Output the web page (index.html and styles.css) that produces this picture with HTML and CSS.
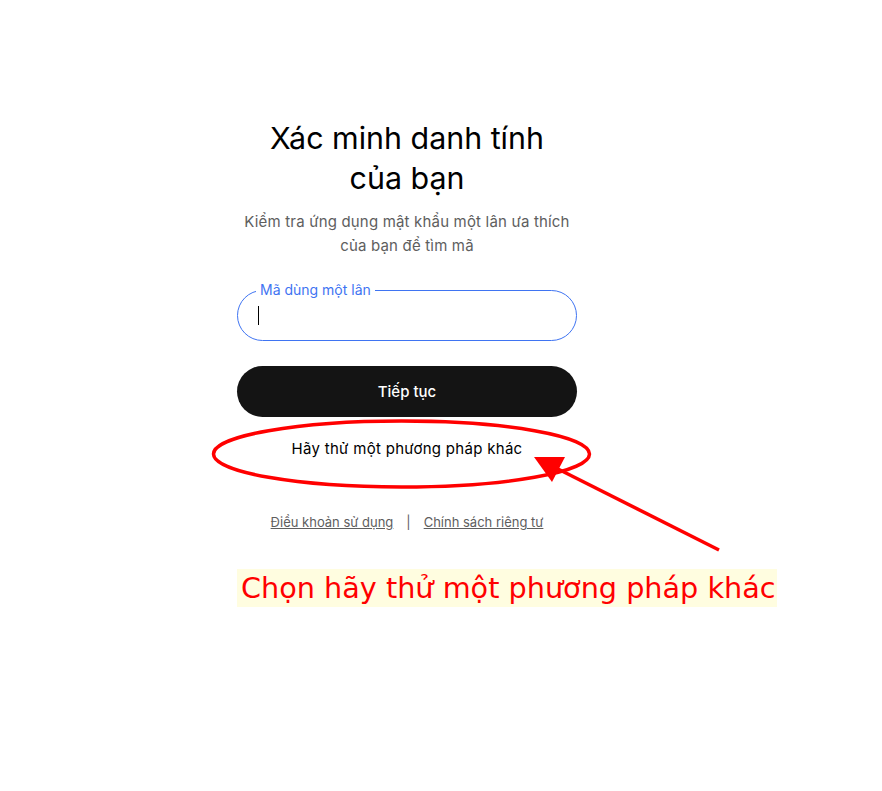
FILE: index.html
```html
<!DOCTYPE html>
<html lang="vi">
<head>
<meta charset="utf-8">
<link rel="stylesheet" href="styles.css">
</head>
<body>
<main class="page">
  <section class="col">
    <h1 class="title">Xác minh danh tính<br>của bạn</h1>
    <p class="sub">Kiểm tra ứng dụng mật khẩu một lân ưa thích<br>của bạn để tìm mã</p>
    <div class="field">
      <span class="label">Mã dùng một lân</span>
      <span class="caret"></span>
    </div>
    <button class="btn">Tiếp tục</button>
    <div class="alt">Hãy thử một phương pháp khác</div>
    <div class="links">
      <a class="lnk">Điều khoản sử dụng</a>
      <span class="sep">|</span>
      <a class="lnk">Chính sách riêng tư</a>
    </div>
  </section>
  <div class="caption">Chọn hãy thử một phương pháp khác</div>
</main>
<svg class="annot" width="882" height="791" viewBox="0 0 882 791">
  <ellipse cx="401.5" cy="454" rx="188" ry="33" fill="none" stroke="#ff0000" stroke-width="3.5"/>
  <line x1="719" y1="550" x2="556" y2="468" stroke="#ff0000" stroke-width="3.5"/>
  <polygon points="534,457 565,457 552,482" fill="#ff0000"/>
</svg>
</body>
</html>
```
FILE: styles.css
```css
html, body { margin: 0; padding: 0; background: #fff; }
body { width: 882px; height: 791px; position: relative; overflow: hidden; font-family: Inter, "Noto Sans", sans-serif; }
.page { padding-top: 118px; padding-left: 237px; }
.col { width: 340px; display: flex; flex-direction: column; align-items: center; }
.title { margin: 0; font-size: 30.4px; line-height: 40px; font-weight: 400; text-align: center; color: #000; letter-spacing: 0; }
.sub { margin: 12px 0 0; font-size: 15px; line-height: 24px; color: #5e5e5e; text-align: center; letter-spacing: 0.18px; }
.field { position: relative; margin-top: 32px; width: 340px; height: 51px; box-sizing: border-box; border: 1px solid #3f74f2; border-radius: 26px; }
.label { position: absolute; left: 18px; top: -10px; padding: 0 4px; background: #fff; font-size: 14px; line-height: 18px; color: #3f74f2; }
.caret { position: absolute; left: 20px; top: 15px; width: 1px; height: 19px; background: #000; }
.btn { margin-top: 25px; width: 340px; height: 51px; border: 0; border-radius: 26px; background: #141414; color: #fff; font-family: Inter, "Noto Sans", sans-serif; font-size: 15px; font-weight: 500; }
.alt { margin-top: 22px; font-size: 15px; line-height: 20px; color: #000; letter-spacing: 0.3px; }
.links { margin-top: 53px; display: flex; gap: 13px; align-items: center; font-size: 13px; line-height: 20px; color: #5e5e5e; }
.lnk { text-decoration: underline; color: #5e5e5e; }
.sep { color: #5e5e5e; }
.caption { margin-top: 37px; width: 540px; height: 38px; background: #fffde0; color: #ff0000; font-family: "DejaVu Sans", sans-serif; font-size: 28.7px; line-height: 38px; padding-left: 4px; box-sizing: border-box; white-space: nowrap; }
.annot { position: absolute; left: 0; top: 0; pointer-events: none; }
```
